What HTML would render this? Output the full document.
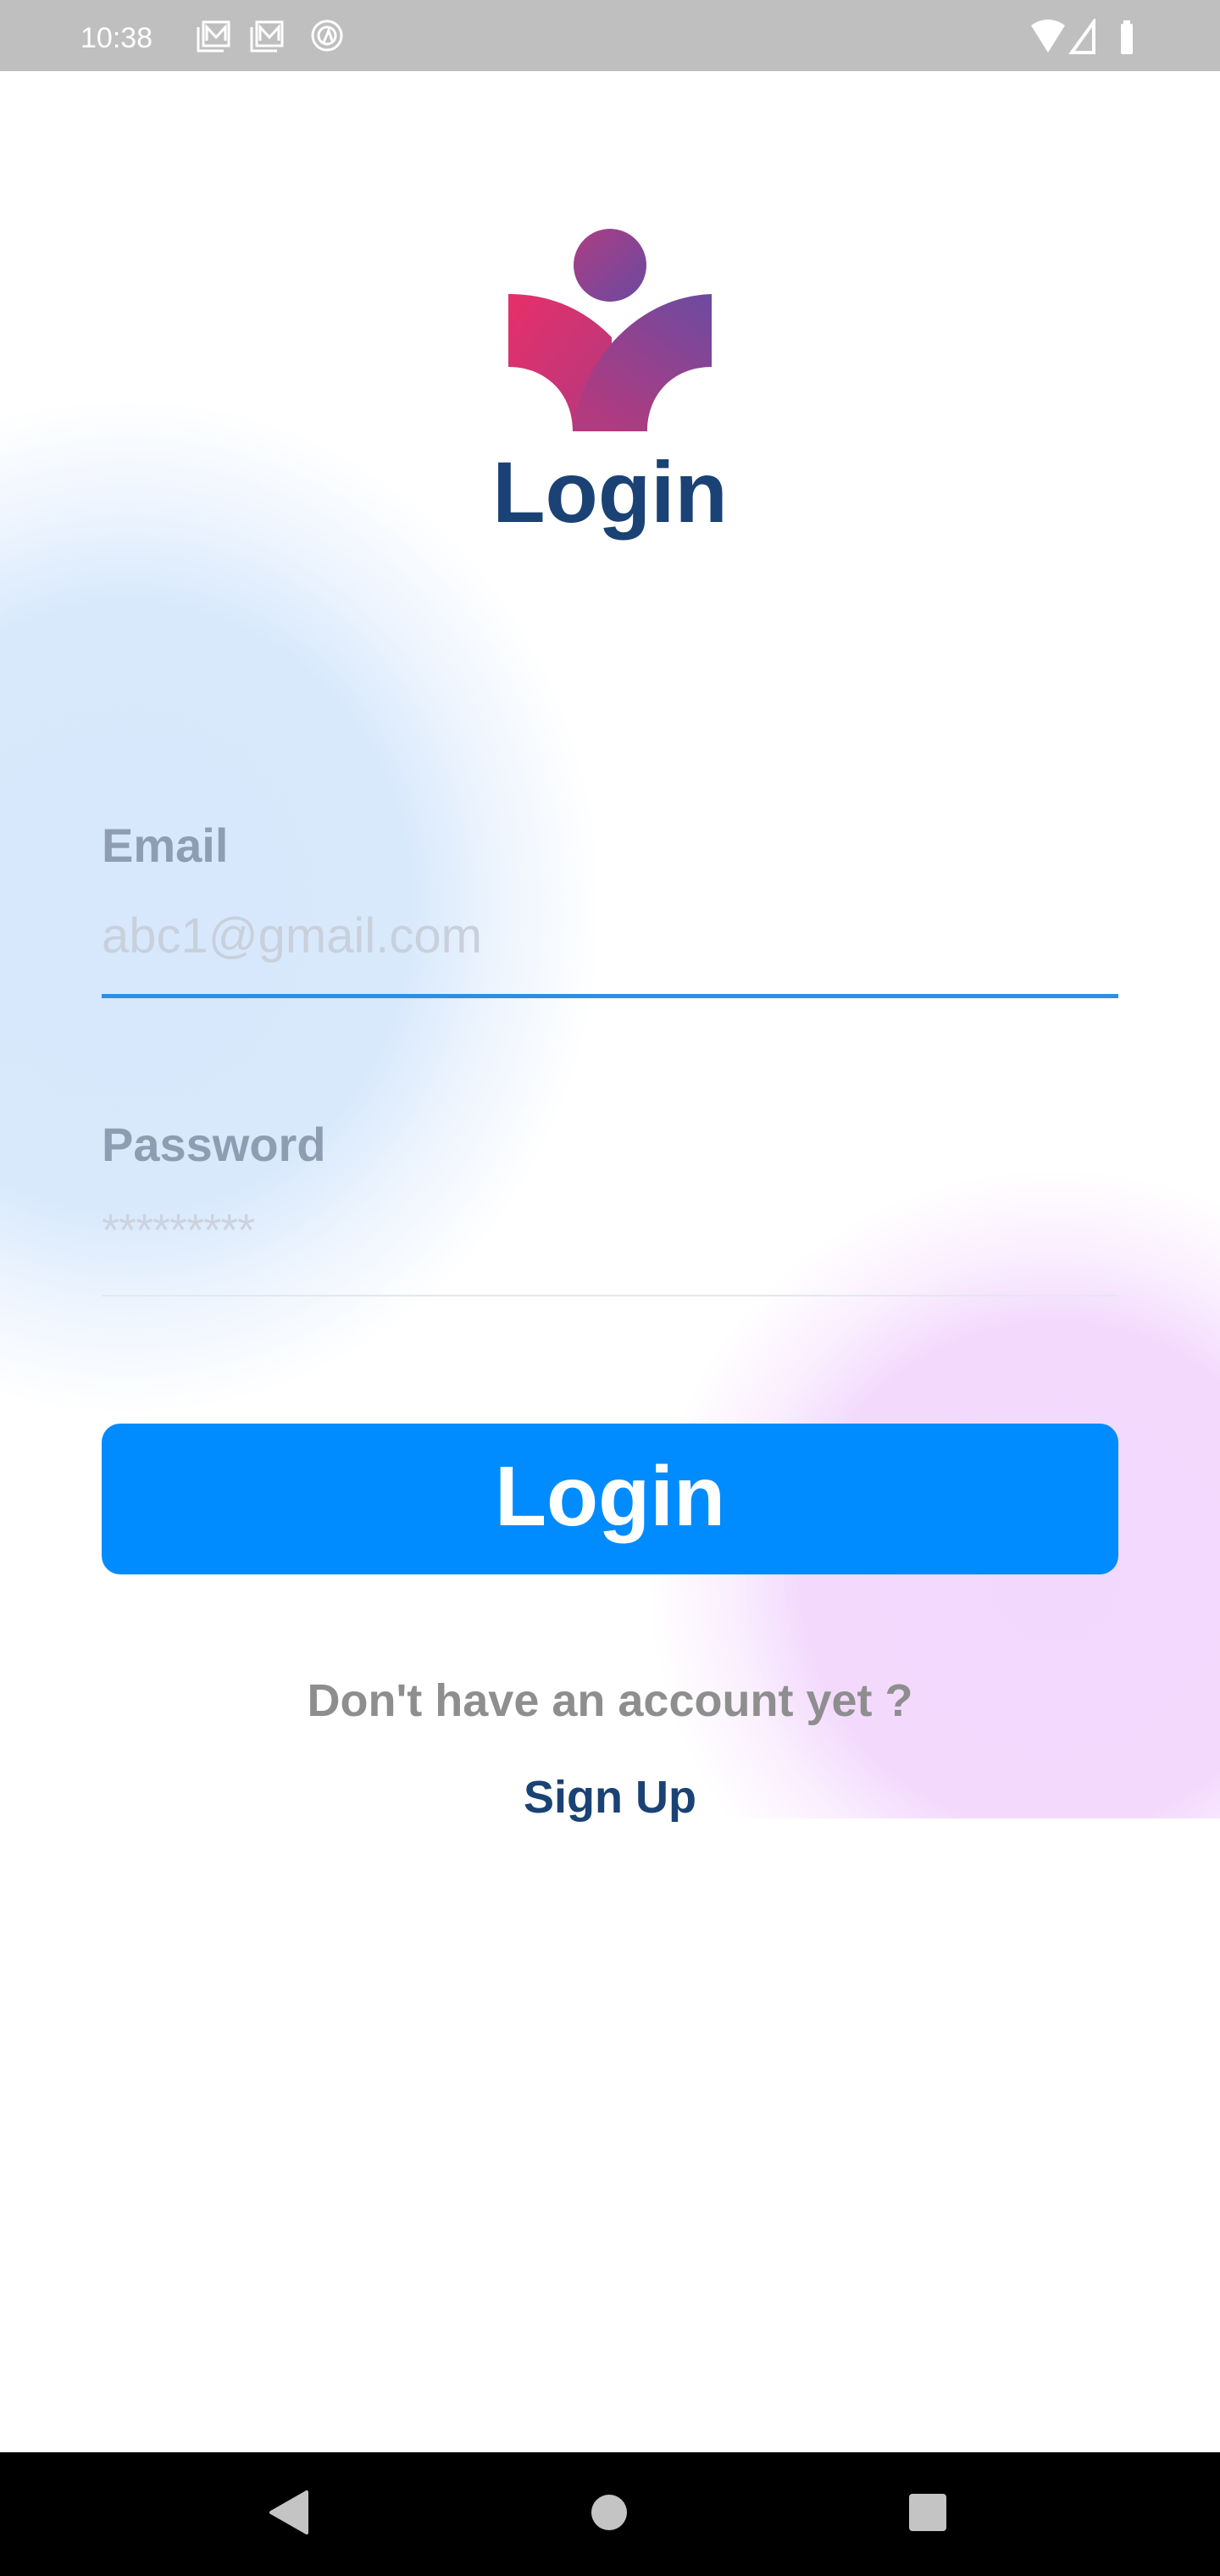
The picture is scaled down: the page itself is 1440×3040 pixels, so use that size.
<!DOCTYPE html>
<html><head><meta charset="utf-8">
<style>
*{margin:0;padding:0;box-sizing:border-box}
html,body{width:1440px;height:3040px;overflow:hidden;background:#fff;font-family:"Liberation Sans",sans-serif;position:relative}
.abs{position:absolute}
#blue{left:0;top:0;width:1440px;height:2200px;background:radial-gradient(ellipse 560px 600px at 150px 1070px,#d8e8fc 0,#d9e9fc 60%,rgba(232,241,253,0.7) 80%,rgba(255,255,255,0) 100%)}
#pink{left:0;top:1300px;width:1440px;height:846px;background:radial-gradient(circle at 1245px 560px,#f2d8fd 0,#f3dafd 300px,rgba(246,228,253,0.6) 380px,rgba(255,255,255,0) 480px)}
#status{left:0;top:0;width:1440px;height:84px;background:#bfbfbf}
.lbl{left:120px;color:#8f9db3;font-weight:bold;font-size:56px;line-height:1}
.ph{left:120px;color:#c8d0dc;font-size:58px;line-height:1}
.c{left:0;width:1440px;text-align:center;font-weight:bold;line-height:1}
</style></head><body>
<div id="blue" class="abs"></div>
<div id="pink" class="abs"></div>
<div id="status" class="abs">
  <div class="abs" style="left:95px;top:26px;color:#fff;font-size:34px">10:38</div>
  <svg class="abs" style="left:230px;top:22px" width="190" height="44" viewBox="0 0 190 44">
    <g fill="none" stroke="#fff" stroke-width="3">
      <rect x="10" y="4" width="30" height="28"/><path d="M4 10V38H34"/><path d="M14 26V10L25 22L36 10V26"/>
      <rect x="73" y="4" width="30" height="28"/><path d="M67 10V38H97"/><path d="M77 26V10L88 22L99 10V26"/>
      <circle cx="156" cy="20" r="17"/><circle cx="156" cy="20" r="10"/><path d="M152 28L158 14L162 26"/>
    </g>
  </svg>
  <svg class="abs" style="left:1215px;top:22px" width="140" height="44" viewBox="0 0 140 44">
    <path d="M2 8Q22 -6 42 8L22 40Z" fill="#fff"/>
    <path d="M50 40L76 4V40Z" fill="none" stroke="#fff" stroke-width="4"/>
    <rect x="108" y="6" width="14" height="36" rx="2" fill="#fff"/><rect x="111" y="2" width="8" height="6" fill="#fff"/>
  </svg>
</div>
<svg class="abs" style="left:0;top:0" width="1440" height="700" viewBox="0 0 1440 700">
  <defs>
    <linearGradient id="gl" x1="0" y1="0" x2="1" y2="1"><stop offset="0" stop-color="#e72f69"/><stop offset="1" stop-color="#b13a80"/></linearGradient>
    <linearGradient id="gr" x1="1" y1="0" x2="0.3" y2="1"><stop offset="0" stop-color="#6c4ba0"/><stop offset="1" stop-color="#b23a7f"/></linearGradient>
    <linearGradient id="gc" x1="0" y1="0" x2="1" y2="1"><stop offset="0" stop-color="#ad3d83"/><stop offset="1" stop-color="#6a4aa0"/></linearGradient>
  </defs>
  <circle cx="720" cy="313" r="43" fill="url(#gc)"/>
  <path d="M600 347C650 347 690 365 722 398L722 509L676 509C676 465 645 433 600 433Z" fill="url(#gl)"/>
  <path d="M840 347C765 349 690 410 676 509L764 509C764 465 795 433 840 433Z" fill="url(#gr)"/>
</svg>
<div class="c abs" style="top:530px;color:#1a4274;font-size:102px">Login</div>

<div class="lbl abs" style="top:970px">Email</div>
<div class="ph abs" style="top:1076px">abc1@gmail.com</div>
<div class="abs" style="left:120px;top:1173px;width:1200px;height:5px;background:#2a90e6"></div>
<div class="lbl abs" style="top:1323px">Password</div>
<div class="ph abs" style="top:1425px;font-size:54px;color:#ccd3de;letter-spacing:-1px">*********</div>
<div class="abs" style="left:120px;top:1528px;width:1200px;height:2px;background:#e3e8ef"></div>

<div class="abs" style="left:120px;top:1680px;width:1200px;height:178px;background:#008cff;border-radius:22px"></div>
<div class="c abs" style="top:1716px;color:#fff;font-size:100px">Login</div>

<div class="c abs" style="top:1980px;color:#8e8e8e;font-size:54px">Don't have an account yet ?</div>
<div class="c abs" style="top:2094px;color:#1a4274;font-size:54px">Sign Up</div>

<div class="abs" style="left:0;top:2894px;width:1440px;height:146px;background:#000">
  <svg class="abs" style="left:0;top:0" width="1440" height="146" viewBox="0 0 1440 146">
    <path d="M362 47V95L320 71Z" fill="#c4c4c4" stroke="#c4c4c4" stroke-width="4" stroke-linejoin="round"/>
    <circle cx="719" cy="71" r="21" fill="#c4c4c4"/>
    <rect x="1073" y="49" width="44" height="44" rx="4" fill="#c4c4c4"/>
  </svg>
</div>
</body></html>
